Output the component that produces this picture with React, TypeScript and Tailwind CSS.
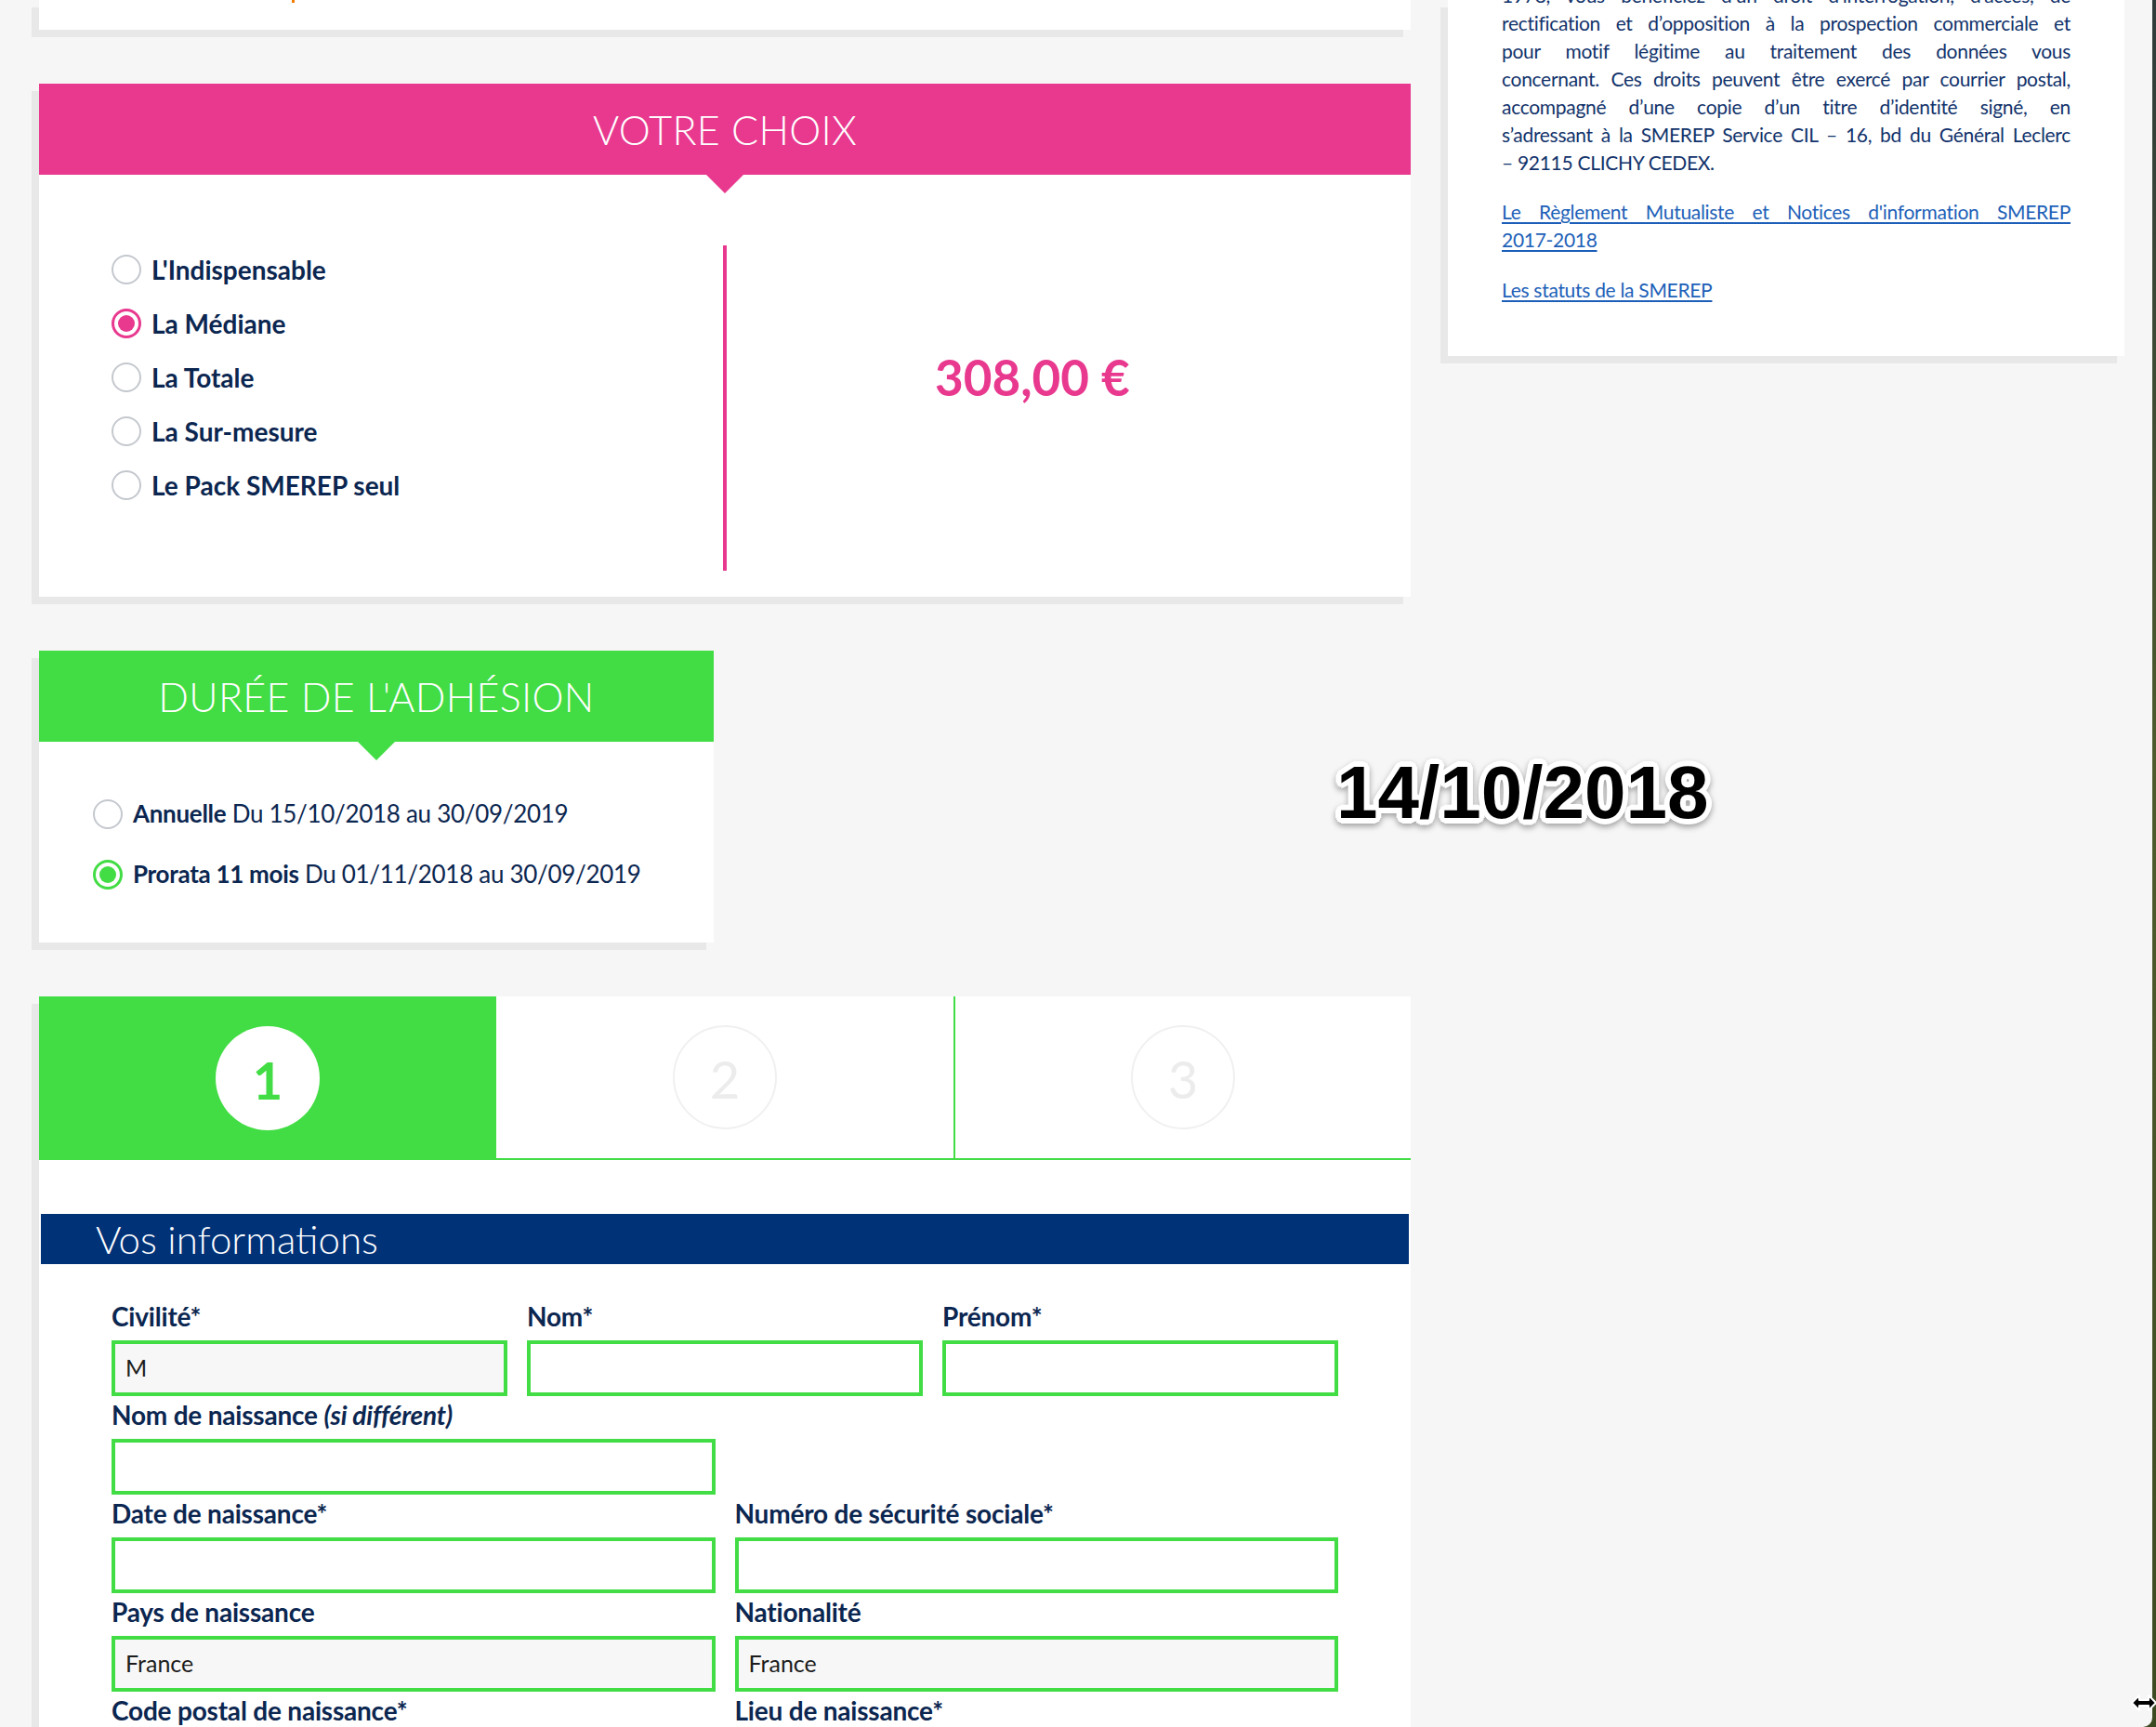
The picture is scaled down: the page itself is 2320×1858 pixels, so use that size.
import React from 'react';

type Tone = 'pink' | 'green';

function Radio({ checked = false, tone = 'pink' }: { checked?: boolean; tone?: Tone }) {
  if (!checked) {
    return <span className="block h-[32px] w-[32px] shrink-0 rounded-full border-2 border-[#c4c8ce] bg-white" />;
  }
  const ring = tone === 'pink' ? 'border-[#e8398f]' : 'border-[#42dc44]';
  const dot = tone === 'pink' ? 'bg-[#e8398f]' : 'bg-[#42dc44]';
  return (
    <span className={`flex h-[32px] w-[32px] shrink-0 items-center justify-center rounded-full border-[3px] bg-white ${ring}`}>
      <span className={`block h-[18px] w-[18px] rounded-full ${dot}`} />
    </span>
  );
}

function CardHeader({ title, tone }: { title: string; tone: Tone }) {
  const bg = tone === 'pink' ? 'bg-[#e8398f]' : 'bg-[#42dc44]';
  const tip = tone === 'pink' ? 'border-t-[#e8398f]' : 'border-t-[#42dc44]';
  return (
    <div className={`relative flex h-[98px] items-center justify-center ${bg}`}>
      <h2 className="text-[43px] font-light leading-none tracking-[0.3px] text-white">{title}</h2>
      {/* little speech-bubble tip under the header */}
      <span
        className={`absolute left-1/2 top-full h-0 w-0 -translate-x-1/2 border-x-[20px] border-t-[20px] border-x-transparent ${tip}`}
      />
    </div>
  );
}

function Label({ children }: { children: React.ReactNode }) {
  return (
    <div className="mb-[6px] h-[40px] text-[28px] font-bold leading-[40px] tracking-[-0.2px] text-[#0b2650]">
      {children}
    </div>
  );
}

function Field({ value, filled = false }: { value?: string; filled?: boolean }) {
  return (
    <div
      className={`flex h-[60px] items-center border-4 border-[#42dc44] px-[11px] text-[25px] text-[#1c1c1c] ${
        filled ? 'bg-[#f7f7f7]' : 'bg-white'
      }`}
    >
      {value}
    </div>
  );
}

const plans = ["L'Indispensable", 'La Médiane', 'La Totale', 'La Sur-mesure', 'Le Pack SMEREP seul'];

const cnilLines = [
  '1978, vous bénéficiez d’un droit d’interrogation, d’accès, de',
  'rectification et d’opposition à la prospection commerciale et',
  'pour motif légitime au traitement des données vous',
  'concernant. Ces droits peuvent être exercé par courrier postal,',
  'accompagné d’une copie d’un titre d’identité signé, en',
  's’adressant à la SMEREP Service CIL – 16, bd du Général Leclerc',
];

export default function App() {
  return (
    <div className="relative h-[1858px] w-[2320px] overflow-hidden bg-[linear-gradient(180deg,#2f3b3a_0%,#4d5b2c_45%,#3c4a22_100%)] font-['Lato','Open_Sans',sans-serif]">
      <div className="h-full w-[2316px] overflow-hidden rounded-br-[10px] bg-[#f6f6f6]">
        <div className="flex items-start gap-[40px] pl-[42px]">
          {/* left column */}
          <div className="flex w-[1476px] flex-col gap-[58px]">
            <div className="h-[32px] bg-white shadow-[-8px_8px_0_#e8e8e8]">
              <div className="ml-[272px] h-[3px] w-[3px] bg-[#f07d00]" />
            </div>

            {/* Votre choix */}
            <section className="bg-white shadow-[-8px_8px_0_#e8e8e8]">
              <CardHeader title="VOTRE CHOIX" tone="pink" />
              <div className="flex items-start pb-[28px] pt-[76px]">
                <ul className="-mt-[3px] w-[736px] pl-[78px]">
                  {plans.map((p, i) => (
                    <li key={p} className="flex h-[58px] items-center gap-[11px]">
                      <Radio checked={i === 1} tone="pink" />
                      <span className="text-[28px] font-bold text-[#0b2650]">{p}</span>
                    </li>
                  ))}
                </ul>
                <div className="h-[350px] w-[4px] bg-[#e8398f]" />
                <div className="flex-1 pl-[224px] pt-[112px]">
                  <p className="text-[53px] font-bold leading-[60px] text-[#e8398f]">308,00 €</p>
                </div>
              </div>
            </section>

            {/* Durée de l'adhésion */}
            <section className="h-[314px] w-[726px] bg-white shadow-[-8px_8px_0_#e8e8e8]">
              <CardHeader title="DURÉE DE L'ADHÉSION" tone="green" />
              <div className="pl-[58px] pt-[45px] text-[26px] tracking-[-0.3px] text-[#0b2650]">
                <div className="flex h-[65px] items-center gap-[11px]">
                  <Radio />
                  <span>
                    <b className="font-bold">Annuelle</b> Du 15/10/2018 au 30/09/2019
                  </span>
                </div>
                <div className="flex h-[65px] items-center gap-[11px]">
                  <Radio checked tone="green" />
                  <span>
                    <b className="font-bold">Prorata 11 mois</b> Du 01/11/2018 au 30/09/2019
                  </span>
                </div>
              </div>
            </section>

            {/* Steps + form */}
            <section className="bg-white pb-[200px] shadow-[-8px_8px_0_#e8e8e8]">
              <div className="grid h-[176px] grid-cols-3">
                <div className="flex items-center justify-center bg-[#42dc44]">
                  <span className="flex h-[112px] w-[112px] items-center justify-center rounded-full bg-white pt-[3px] text-[56px] font-bold text-[#42dc44]">
                    1
                  </span>
                </div>
                <div className="flex items-center justify-center border-b-2 border-[#42dc44]">
                  <span className="flex h-[112px] w-[112px] items-center justify-center rounded-full border-2 border-[#f0f0f0] pt-[3px] text-[56px] text-[#ececec]">
                    2
                  </span>
                </div>
                <div className="flex items-center justify-center border-b-2 border-l-2 border-[#42dc44]">
                  <span className="flex h-[112px] w-[112px] items-center justify-center rounded-full border-2 border-[#f0f0f0] pt-[3px] text-[56px] text-[#ececec]">
                    3
                  </span>
                </div>
              </div>

              <div className="mx-[2px] mt-[58px] flex h-[54px] items-center bg-[#003278] pl-[59px]">
                <h3 className="text-[42px] font-light leading-none text-white">Vos informations</h3>
              </div>

              <div className="w-[1398px] pl-[78px] pt-[36px]">
                <div className="grid grid-cols-3 gap-x-[21px]">
                  <div>
                    <Label>Civilité*</Label>
                    <Field value="M" filled />
                  </div>
                  <div>
                    <Label>Nom*</Label>
                    <Field />
                  </div>
                  <div>
                    <Label>Prénom*</Label>
                    <Field />
                  </div>
                </div>
                <div className="grid grid-cols-2 gap-x-[21px]">
                  <div>
                    <Label>
                      Nom de naissance <i className="italic">(si différent)</i>
                    </Label>
                    <Field />
                  </div>
                  <div />
                  <div>
                    <Label>Date de naissance*</Label>
                    <Field />
                  </div>
                  <div>
                    <Label>Numéro de sécurité sociale*</Label>
                    <Field />
                  </div>
                  <div>
                    <Label>Pays de naissance</Label>
                    <Field value="France" filled />
                  </div>
                  <div>
                    <Label>Nationalité</Label>
                    <Field value="France" filled />
                  </div>
                  <div>
                    <Label>Code postal de naissance*</Label>
                    <Field />
                  </div>
                  <div>
                    <Label>Lieu de naissance*</Label>
                    <Field />
                  </div>
                </div>
              </div>
            </section>
          </div>

          {/* right column */}
          <aside className="w-[728px] bg-white px-[58px] pb-[56px] text-[21px] leading-[30px] tracking-[-0.3px] text-[#12336b] shadow-[-8px_8px_0_#e8e8e8]">
            <div className="-mt-[20px]">
              {cnilLines.map((l) => (
                <span key={l} className="block whitespace-nowrap text-justify [text-align-last:justify]">
                  {l}
                </span>
              ))}
              <span className="block">– 92115 CLICHY CEDEX.</span>
            </div>
            <a className="mt-[23px] block text-[#1d5fb8] underline underline-offset-[3px]">
              <span className="block text-justify [text-align-last:justify]">
                Le Règlement Mutualiste et Notices d'information SMEREP
              </span>
              <span className="block">2017-2018</span>
            </a>
            <a className="mt-[24px] block text-[#1d5fb8] underline underline-offset-[3px]">Les statuts de la SMEREP</a>
          </aside>
        </div>
      </div>

      {/* date stamp laid over the screenshot */}
      <div className="absolute left-[1438px] top-[813px] font-['Liberation_Sans','Arial',sans-serif] text-[80px] font-bold leading-[80px] text-black drop-shadow-[0_3px_3px_rgba(0,0,0,0.35)] [text-shadow:6px_0_0_#fff,-6px_0_0_#fff,0_6px_0_#fff,0_-6px_0_#fff,4px_4px_0_#fff,-4px_4px_0_#fff,4px_-4px_0_#fff,-4px_-4px_0_#fff,5px_2px_0_#fff,-5px_2px_0_#fff,5px_-2px_0_#fff,-5px_-2px_0_#fff,2px_5px_0_#fff,-2px_5px_0_#fff,2px_-5px_0_#fff,-2px_-5px_0_#fff]">
        14/10/2018
      </div>

      {/* resize cursor */}
      <svg className="absolute left-[2293px] top-[1821px]" width="28" height="22" viewBox="0 0 28 22" aria-hidden>
        <path
          d="M1 11 L9 3 L9 8 L19 8 L19 3 L27 11 L19 19 L19 14 L9 14 L9 19 Z"
          fill="#000"
          stroke="#fff"
          strokeWidth="2"
          strokeLinejoin="round"
        />
      </svg>
    </div>
  );
}
